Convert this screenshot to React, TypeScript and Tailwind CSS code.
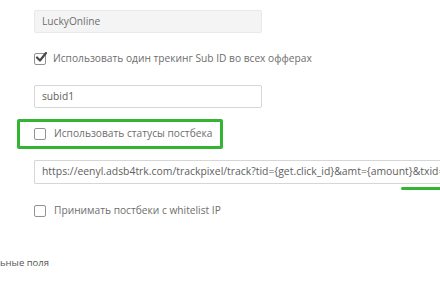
import React from "react";

function Box({ checked }: { checked?: boolean }) {
  return (
    <span className="relative flex h-[12px] w-[12px] shrink-0 items-center justify-center rounded-[2px] border border-[#929292] bg-white">
      {checked && (
        <svg width="12" height="11" viewBox="0 0 12 11" className="absolute left-[0px] top-[-2px]">
          <path d="M2 5.5 L5 8.5 L11 1" fill="none" stroke="#4a4a4a" strokeWidth="2.2" strokeLinecap="round" strokeLinejoin="round" />
        </svg>
      )}
    </span>
  );
}

export default function App() {
  return (
    <div
      className="h-[300px] w-[440px] overflow-hidden bg-white text-[10.2px] text-[#6e6e6e]"
      style={{ fontFamily: '"Open Sans", sans-serif' }}
    >
      <div className="flex flex-col pl-[34px] pt-[10px]">
        <div className="flex h-[23px] w-[228px] items-center rounded-[2px] border border-[#e8e8e8] bg-[#f4f4f4] px-[7px] text-[#6e6e6e]">
          LuckyOnline
        </div>
        <div className="mt-[20px] flex h-[12px] items-center gap-[7px]">
          <Box checked />
          <span className="whitespace-nowrap">Использовать один трекинг Sub ID во всех офферах</span>
        </div>
        <div className="mt-[20px] flex h-[23px] w-[228px] items-center rounded-[2px] border border-[#d6d6d6] bg-white px-[7px] text-[#5e5e5e]">
          subid1
        </div>
        <div className="ml-[-17px] mt-[11px] flex h-[30px] w-[206px] items-center gap-[8px] rounded-[2px] border-[3px] border-[#33b533] pl-[14px]">
          <Box />
          <span className="whitespace-nowrap">Использовать статусы постбека</span>
        </div>
        <div className="mt-[11px] flex h-[24px] w-[430px] shrink-0 items-center overflow-hidden whitespace-nowrap rounded-l-[2px] border border-r-0 border-[#d6d6d6] bg-white pl-[7px] text-[10.4px] text-[#5e5e5e]">
          https://eenyl.adsb4trk.com/trackpixel/track?tid=&#123;get.click_id&#125;&amp;amt=&#123;amount&#125;&amp;txid=&#123;transaction_id&#125;
        </div>
        <div className="ml-[367px] mt-[3px] h-[3px] w-[40px] rounded-full bg-[#33b533]" />
        <div className="mt-[15px] flex h-[12px] items-center gap-[8px]">
          <Box />
          <span className="whitespace-nowrap">Принимать постбеки с whitelist IP</span>
        </div>
      </div>
      <div className="mt-[39px] text-[9.5px] text-[#555]">ьные поля</div>
    </div>
  );
}
